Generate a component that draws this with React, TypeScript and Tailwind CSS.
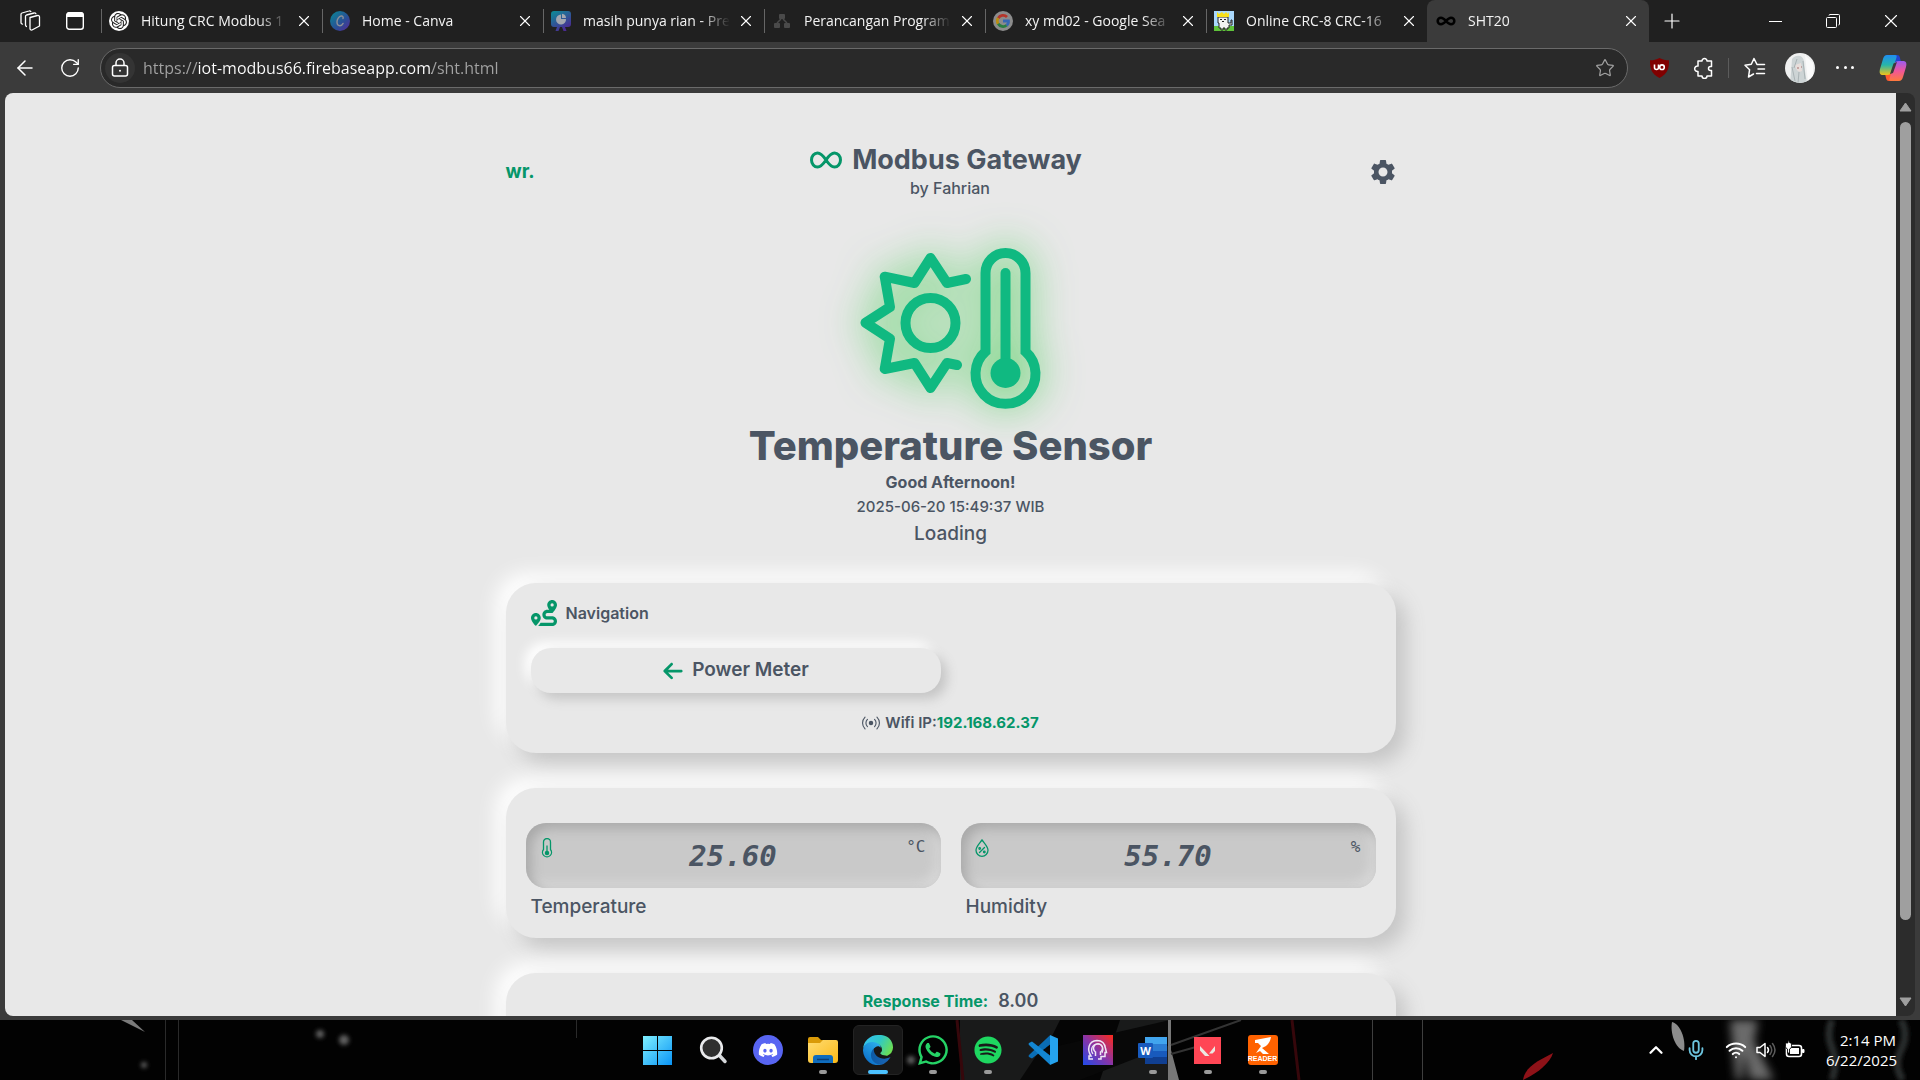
import React from "react";
import { FaRoute, FaDiscord, FaSpotify, FaWhatsapp, FaArrowLeft } from "react-icons/fa6";
import { MdSettings } from "react-icons/md";
import { BsBroadcast } from "react-icons/bs";
import { SiOpenai } from "react-icons/si";
import { ArrowLeft, ChevronUp, Infinity as InfinityIcon, Mic, Plus, RotateCw, Star, Wifi, X } from "lucide-react";

function CanvaIcon() {
  return (
    <svg viewBox="0 0 20 20" className="size-5">
      <defs>
        <linearGradient id="canva" x1="0" y1="0" x2="1" y2="1">
          <stop offset="0" stopColor="#078a94" />
          <stop offset="0.6" stopColor="#2b4d96" />
          <stop offset="1" stopColor="#5b2796" />
        </linearGradient>
      </defs>
      <circle cx="10" cy="10" r="10" fill="url(#canva)" />
      <path d="M13 7.500c.6-1.600-.4-2.700-1.800-2.500-2.300.3-4.200 3.200-4.200 6 0 2.200 1.100 3.700 2.800 3.700 1.500 0 2.600-.9 3.300-2.300" fill="none" stroke="#8d8f98" strokeWidth="1.400" strokeLinecap="round" />
    </svg>
  );
}

function ChartBoardIcon() {
  return (
    <svg viewBox="0 0 20 20" className="size-5">
      <defs>
        <linearGradient id="board" x1="0" y1="0" x2="0.600" y2="1">
          <stop offset="0" stopColor="#0b8f98" />
          <stop offset="1" stopColor="#4b2a93" />
        </linearGradient>
      </defs>
      <path d="M3 0h14a3 3 0 0 1 3 3v10a3 3 0 0 1-3 3h-3l1.500 4h-3L11 16H9l-1.500 4h-3L6 16H3a3 3 0 0 1-3-3V3a3 3 0 0 1 3-3z" fill="url(#board)" />
      <path d="M10 3.500V8h5a5 5 0 1 1-5-4.500z" fill="#a3a7b0" />
      <path d="M11 2.800a4.500 4.500 0 0 1 4 4.200H11z" fill="#a3a7b0" />
    </svg>
  );
}

function NodesIcon() {
  return (
    <svg viewBox="0 0 20 20" className="size-5" fill="#4a4a4a">
      <rect x="7" y="3" width="6" height="5" rx="1" />
      <rect x="2" y="12" width="6" height="5" rx="1" />
      <rect x="12" y="12" width="6" height="5" rx="1" />
      <path d="M9 8 5 12M11 8l4 4" stroke="#4a4a4a" strokeWidth="1.500" />
    </svg>
  );
}

function GoogleIcon() {
  return (
    <span className="flex size-5 items-center justify-center rounded-full bg-[#8c8c8c]">
      <svg viewBox="0 0 20 20" className="size-4" fill="none" strokeWidth="3.500">
        <path d="M15 5a7 7 0 0 0-11 1.500" stroke="#b5352b" />
        <path d="M4 6.300a7 7 0 0 0 0 7.400" stroke="#b98d10" />
        <path d="M4 13.500a7 7 0 0 0 10.500 1.800" stroke="#2a7d41" />
        <path d="M14.500 15.500A6 6 0 0 0 16.800 10H10" stroke="#3767b4" />
      </svg>
    </span>
  );
}

function CrownCatIcon() {
  return (
    <svg viewBox="0 0 20 20" className="size-5">
      <rect width="20" height="15" fill="#a9d8fb" />
      <rect y="15" width="20" height="5" fill="#5fc23a" />
      <path d="M4 6h10v6h3v-3h1v5h-3v3h-2v2h-2v-2H9v2H7v-2H5v-5H4z" fill="#f3f3f3" stroke="#222" />
      <path d="M3 1l2 2 3-2 2 2 2-2 2 2 1-2v5H3z" fill="#f7e018" />
      <path d="M6 8h2v1H6zM10 8h2v1h-2zM8 10h2v1H8z" fill="#222" />
    </svg>
  );
}

type TabInfo = { title: string; icon: React.ReactNode; active?: boolean };

const TABS: TabInfo[] = [
  {
    title: "Hitung CRC Modbus 1",
    icon: (
      <span className="flex size-5 items-center justify-center rounded-full bg-white">
        <SiOpenai className="size-4 text-[#222222]" />
      </span>
    ),
  },
  { title: "Home - Canva", icon: <CanvaIcon /> },
  { title: "masih punya rian - Pre", icon: <ChartBoardIcon /> },
  { title: "Perancangan Program", icon: <NodesIcon /> },
  { title: "xy md02 - Google Sea", icon: <GoogleIcon /> },
  { title: "Online CRC-8 CRC-16", icon: <CrownCatIcon /> },
  { title: "SHT20", icon: <InfinityIcon className="size-5 text-black" strokeWidth={3} />, active: true },
];

function Tab({ title, icon, active }: TabInfo) {
  return (
    <div
      className={
        active
          ? "flex h-[42px] w-[222px] items-center rounded-t-lg bg-[#3b3b3b] pr-[6px] pl-[9px]"
          : "flex h-[42px] w-[221px] items-center pr-[6px]"
      }
    >
      {!active && <span className="mr-[7px] h-6 w-px bg-[#666666]" />}
      <button type="button" role="tab" aria-selected={!!active} className="flex min-w-0 flex-1 items-center gap-3 text-left">
        <span className="shrink-0">{icon}</span>
        <span className="flex-1 mask-r-from-80% pb-px text-sm whitespace-nowrap text-[#f3f3f3]">{title}</span>
      </button>
      <button type="button" aria-label={"Close " + title} className="ml-1 flex size-6 items-center justify-center text-white">
        <X className="size-[18px]" strokeWidth={1.500} />
      </button>
    </div>
  );
}

function TitleBar() {
  return (
    <header className="flex h-[42px] shrink-0 items-center bg-[#202020] text-white">
      <div className="flex w-[101px] items-center gap-6 pl-[19px]">
        <button type="button" aria-label="Workspaces">
          <svg viewBox="0 0 22 22" className="size-[22px]" fill="none" stroke="currentColor" strokeWidth="1.300" strokeLinejoin="round">
            <path d="M11 7.500 18.500 5.500a1.500 1.500 0 0 1 2 1.500v9L13 20a1.500 1.500 0 0 1-2-1.500z" />
            <path d="M8 16.500a1.500 1.500 0 0 1-1.500-1.500V6.500a1.500 1.500 0 0 1 1-1.500L15 3a1.500 1.500 0 0 1 2 1.300" />
            <path d="M4 14a1.500 1.500 0 0 1-2-1.500v-8A1.500 1.500 0 0 1 3 3l7-2a1.500 1.500 0 0 1 2 1" />
          </svg>
        </button>
        <button type="button" aria-label="Tab actions">
          <svg viewBox="0 0 20 20" className="size-5">
            <rect x="1.700" y="1.700" width="16.600" height="16.600" rx="2.500" fill="none" stroke="white" strokeWidth="1.400" />
            <path d="M1.500 6V4a3 3 0 0 1 3-3h11a3 3 0 0 1 3 3v2z" fill="white" />
          </svg>
        </button>
      </div>
      <div role="tablist" className="flex">
        {TABS.map((t) => (
          <Tab key={t.title} {...t} />
        ))}
      </div>
      <button type="button" aria-label="New tab" className="ml-[9px] flex size-7 items-center justify-center">
        <Plus className="size-6" strokeWidth={1.200} />
      </button>
      <div className="ml-auto flex">
        <button type="button" aria-label="Minimize" className="flex w-[58px] items-center justify-center">
          <span className="h-px w-[13px] bg-white" />
        </button>
        <button type="button" aria-label="Restore" className="flex w-[58px] items-center justify-center">
          <svg viewBox="0 0 14 14" className="size-[14px]" fill="none" stroke="currentColor">
            <rect x="0.500" y="3.500" width="10" height="10" rx="1" />
            <path d="M3 1.500Q3 .5 4 .5h8.500q1 0 1 1V10q0 1-1 1" />
          </svg>
        </button>
        <button type="button" aria-label="Close" className="flex w-[58px] items-center justify-center">
          <X className="size-[22px]" strokeWidth={1.200} />
        </button>
      </div>
    </header>
  );
}

function CopilotIcon() {
  return (
    <svg viewBox="0 0 28 28" className="size-7">
      <defs>
        <linearGradient id="cpA" x1="0" y1="0" x2="0" y2="1">
          <stop offset="0" stopColor="#1f8df2" />
          <stop offset="0.500" stopColor="#27b6a9" />
          <stop offset="1" stopColor="#f0c419" />
        </linearGradient>
        <linearGradient id="cpB" x1="0" y1="0" x2="0" y2="1">
          <stop offset="0" stopColor="#9a5cf0" />
          <stop offset="0.500" stopColor="#f0569a" />
          <stop offset="1" stopColor="#ff7a3c" />
        </linearGradient>
      </defs>
      <path d="M15 1h3c2 0 2.500 1 3 3l1 4h-4c-2 0-3 .5-4 2z" fill="#2343cf" />
      <path d="M13 27h-3c-2 0-2.500-1-3-3l-1-4h4c2 0 3-.5 4-2z" fill="#ff5a2e" />
      <path d="M8 1h8c1.500 0 2 .8 1.500 2.500l-4.500 14C12.300 19.800 11 21 8 21H4c-3 0-4-2-3-6L4 5c.8-2.500 2-4 4-4z" fill="url(#cpA)" />
      <path d="M20 27h-8c-1.500 0-2-.8-1.500-2.500l4.500-14C15.700 8.200 17 7 20 7h4c3 0 4 2 3 6l-3 10c-.8 2.500-2 4-4 4z" fill="url(#cpB)" />
      <path d="M14.500 9.500 18 8l-4 11-3 1z" fill="#3b3b3b" />
    </svg>
  );
}

function Toolbar() {
  return (
    <div className="flex h-[51px] shrink-0 items-center bg-[#3b3b3b] text-white">
      <button type="button" aria-label="Back" className="ml-[13px] flex size-6 items-center justify-center">
        <ArrowLeft className="size-6" strokeWidth={1.500} />
      </button>
      <button type="button" aria-label="Refresh" className="ml-[21px] flex size-6 items-center justify-center">
        <RotateCw className="size-[22px]" strokeWidth={1.500} />
      </button>
      <div className="ml-[18px] flex h-10 flex-1 items-center rounded-full border border-[#6a6a6a] bg-[#292929] pr-3 pl-1">
        <button type="button" aria-label="Site information" className="flex size-[30px] items-center justify-center rounded-full bg-[#343434]">
          <svg viewBox="0 0 20 20" className="size-5" fill="none" stroke="currentColor" strokeWidth="1.500">
            <rect x="2.500" y="7.500" width="15" height="10.500" rx="2" />
            <path d="M6 7V5a4 4 0 0 1 8 0v2" />
            <circle cx="10" cy="12.800" r="1" fill="currentColor" stroke="none" />
          </svg>
        </button>
        <input
          type="text"
          aria-label="Address"
          defaultValue="https://iot-modbus66.firebaseapp.com/sht.html"
          className="ml-2 min-w-0 flex-1 bg-[linear-gradient(to_right,#a3a3a3_55px,#ffffff_55px,#ffffff_289px,#a3a3a3_289px)] bg-clip-text text-base text-transparent caret-white outline-none"
        />
        <button type="button" aria-label="Add to favorites" className="text-[#a0a0a0]">
          <Star className="size-5" strokeWidth={1.500} />
        </button>
      </div>
      <button type="button" aria-label="uBlock Origin" className="ml-[22px]">
        <svg viewBox="0 0 19 20" className="h-5 w-[19px]">
          <path d="M9.500 0c3 1.600 6 2.300 9.500 2.300 0 8.500-1 13-9.500 17.700C1 15.300 0 10.800 0 2.300 3.500 2.300 6.500 1.600 9.500 0z" fill="#800000" />
          <path d="M4.500 6.500v3a2 2 0 0 0 4 0v-3" fill="none" stroke="white" strokeWidth="1.600" />
          <circle cx="12" cy="9.200" r="2.300" fill="none" stroke="white" strokeWidth="1.600" />
        </svg>
      </button>
      <button type="button" aria-label="Extensions" className="ml-6">
        <svg viewBox="0 0 22 22" className="size-[22px]" fill="none" stroke="currentColor" strokeWidth="1.500" strokeLinejoin="round">
          <path d="M5 4h4a2.500 2.500 0 1 1 5 0h4.500v5.500h-1a2 2 0 0 0 0 4h1V19H14a2.500 2.500 0 0 1-5 0H5v-4.500a2.800 2.800 0 1 1 0-5.500z" />
        </svg>
      </button>
      <span className="ml-[13px] h-5 w-px bg-[#5c5c5c]" />
      <button type="button" aria-label="Favorites" className="ml-[15px]">
        <svg viewBox="0 0 22 22" className="size-[22px]" fill="none" stroke="currentColor" strokeWidth="1.500" strokeLinejoin="round" strokeLinecap="round">
          <path d="M13 7.500 10 1.500 7.300 7.300 1 8.200l4.600 4.500L4.500 20l5-3M13 7.500h7.500M14 12h6.500M12.500 16.500h8" />
        </svg>
      </button>
      <button type="button" aria-label="Profile" className="ml-[19px]">
        <svg viewBox="0 0 30 30" className="size-[30px]">
          <clipPath id="avatar"><circle cx="15" cy="15" r="15" /></clipPath>
          <g clipPath="url(#avatar)">
            <rect width="30" height="30" fill="#eff0f0" />
            <path d="M7 6c4-5 11-4 12 2l1 10 2 12H5l1-10z" fill="#cdd4d5" />
            <path d="M10 12c1 6 4 8 7 6l-1-8z" fill="#e8dedb" />
            <path d="M7 14l3 14M12 6l-3 9M18 8l2 18M14 19l-1 11" stroke="#a9b2b4" fill="none" />
            <path d="M12 15h2M16 14h1" stroke="#a1716e" />
            <path d="M20 2l8 8v14l-5 4z" fill="#fafafa" />
          </g>
        </svg>
      </button>
      <button type="button" aria-label="Settings and more" className="ml-[21px] flex w-[18px] justify-between">
        <span className="size-[3px] rounded-full bg-white" />
        <span className="size-[3px] rounded-full bg-white" />
        <span className="size-[3px] rounded-full bg-white" />
      </button>
      <button type="button" aria-label="Copilot" className="mr-[13px] ml-[25px]">
        <CopilotIcon />
      </button>
    </div>
  );
}

function HeroIcon() {
  return (
    <svg viewBox="851 238 200 180" className="h-[180px] w-[200px] overflow-visible drop-shadow-[0_0_20px_rgba(60,205,75,0.850)]" fill="none" stroke="#10b981" strokeWidth="10" strokeLinecap="round" strokeLinejoin="round">
      <path d="M966 279 947 283 930.500 258 914.500 283 884.700 276.700 890 307 865.500 322.700 890 338.700 884.700 369 914.500 363 930.500 388 947 363 957 365" />
      <circle cx="930.500" cy="323" r="25" />
      <path d="M985.500 351.500V273a20 20 0 0 1 40 0v78.500a30 30 0 1 1-40 0z" strokeLinejoin="miter" />
      <path d="M1005.500 273v90" />
      <circle cx="1005.500" cy="373" r="15" fill="#10b981" stroke="none" />
    </svg>
  );
}

const CARD = "rounded-[30px] bg-[#e8e8e8] shadow-[10px_10px_20px_#c5c5c5,-10px_-10px_20px_#ffffff]";

type ReadingInfo = { label: string; value: string; unit: string; icon: React.ReactNode };

const READINGS: ReadingInfo[] = [
  {
    label: "Temperature",
    value: "25.60",
    unit: "°C",
    icon: (
      <svg viewBox="0 0 20 20" className="size-5" fill="none" stroke="#059669" strokeWidth="1.300">
        <path d="M6.500 11.500V4a3.500 3.500 0 0 1 7 0v7.500a4.500 4.500 0 1 1-7 0zM10 7.500V14" />
        <circle cx="10" cy="15" r="1.600" fill="#059669" />
      </svg>
    ),
  },
  {
    label: "Humidity",
    value: "55.70",
    unit: "%",
    icon: (
      <svg viewBox="0 0 20 20" className="size-5" fill="none" stroke="#059669" strokeWidth="1.300" strokeLinecap="round">
        <path d="M10 2c2.500 3.500 6 6.500 6 10.300a6 6 0 0 1-12 0C4 8.500 7.500 5.500 10 2zM12.500 9.500l-5 5" />
        <circle cx="7.700" cy="10.500" r="0.800" />
        <circle cx="12.300" cy="14" r="0.800" />
      </svg>
    ),
  },
];

function Reading({ label, value, unit, icon }: ReadingInfo) {
  return (
    <div>
      <div className="grid h-[65px] grid-cols-[1fr_auto_1fr] rounded-[20px] bg-[#c9c9c9] px-[11px] font-['DejaVu_Sans_Mono',monospace] shadow-[inset_5px_5px_12px_#a8a8a8,inset_-5px_-5px_12px_#dadada]">
        <span className="pt-[15px]">{icon}</span>
        <output className="self-center text-[29px] leading-8 font-bold italic">{value}</output>
        <span className="pt-[14px] pr-1 text-right text-base leading-5">{unit}</span>
      </div>
      <p className="mt-2 pl-[5px] text-[19px] leading-[22px] font-medium">{label}</p>
    </div>
  );
}

function SensorPage() {
  return (
    <main className="min-w-0 flex-1 overflow-hidden rounded-l-lg bg-[#e8e8e8] font-[Inter,sans-serif] text-[#4b5563]">
      <div className="mx-auto flex max-w-[890px] flex-col">
        <div className="grid grid-cols-[1fr_auto_1fr] items-center pt-[51px]">
          <a href="#home" className="text-[19px] leading-6 font-bold text-[#059669]">wr.</a>
          <div className="-ml-[9px] text-center">
            <h1 className="flex items-center gap-[10px] text-[27px] leading-8 font-bold">
              <svg viewBox="0 0 32 18" className="h-[18px] w-8" fill="none" stroke="#059669" strokeWidth="3" aria-hidden="true">
                <path d="M16 9c-3-4.500-5-7-8.500-7a6 7 0 0 0 0 14C11 16 13 13.500 16 9s5-7 8.500-7a6 7 0 0 1 0 14C21 16 19 13.500 16 9z" />
              </svg>
              Modbus Gateway
            </h1>
            <p className="ml-2 text-base leading-6 font-medium">by Fahrian</p>
          </div>
          <button type="button" aria-label="Settings" className="-mr-0.5 justify-self-end">
            <MdSettings className="size-[30px]" />
          </button>
        </div>
        <div className="flex flex-col items-center pt-[38px]">
          <HeroIcon />
          <h2 className="mt-1 text-[40px] leading-12 font-extrabold">Temperature Sensor</h2>
          <p className="text-base leading-6 font-bold">Good Afternoon!</p>
          <p className="text-[15px] leading-[26px] font-medium">2025-06-20 15:49:37 WIB</p>
          <p className="text-[19px] leading-7 font-medium">Loading</p>
        </div>
        <section className={CARD + " mt-[35px] h-[170px] px-[25px] pt-4"}>
          <div className="flex items-center gap-[9px] pb-[21px]">
            <FaRoute className="size-[26px] text-[#059669]" />
            <h3 className="text-base leading-7 font-semibold">Navigation</h3>
          </div>
          <div className="grid grid-cols-2 gap-5">
            <button type="button" className="flex h-[45px] items-center justify-center gap-2 rounded-[20px] bg-[#e8e8e8] text-[19px] font-semibold shadow-[6px_6px_12px_#c5c5c5,-6px_-6px_12px_#ffffff]">
              <FaArrowLeft className="size-[22px] text-[#059669]" />
              Power Meter
            </button>
          </div>
          <p className="mt-[18px] flex items-center justify-center text-[15px] leading-6 font-semibold">
            <BsBroadcast className="mr-[5px] size-[18px]" />
            Wifi IP:<span className="font-bold text-[#059669]">192.168.62.37</span>
          </p>
        </section>
        <section className={CARD + " mt-[35px] grid h-[150px] grid-cols-2 gap-5 px-5 pt-[35px]"}>
          {READINGS.map((r) => (
            <Reading key={r.label} {...r} />
          ))}
        </section>
        <section className={CARD + " mt-[35px] flex h-[110px] justify-center gap-[10px] pt-4"}>
          <span className="text-base leading-6 font-bold text-[#059669]">Response Time:</span>
          <span className="text-lg leading-6 font-semibold">8.00</span>
        </section>
      </div>
    </main>
  );
}

function Scrollbar() {
  return (
    <div aria-hidden="true" className="flex w-[19px] flex-col items-center rounded-r-lg bg-[#2c2c2c] py-[9px]">
      <svg viewBox="0 0 13 10" className="h-[10px] w-[13px]"><path d="M6.500 1 12 9H1z" fill="#9f9f9f" stroke="#9f9f9f" strokeLinejoin="round" /></svg>
      <div className="mt-[10px] mb-[77px] w-[11px] flex-1 rounded-full bg-[#9f9f9f]" />
      <svg viewBox="0 0 13 10" className="h-[10px] w-[13px]"><path d="M6.500 9 12 1H1z" fill="#9f9f9f" stroke="#9f9f9f" strokeLinejoin="round" /></svg>
    </div>
  );
}

function WindowsIcon() {
  return (
    <svg viewBox="0 0 29 29" className="size-[29px]">
      <defs>
        <linearGradient id="win" gradientUnits="userSpaceOnUse" x1="0" y1="0" x2="29" y2="29">
          <stop offset="0" stopColor="#7ff0ff" />
          <stop offset="1" stopColor="#0a94f5" />
        </linearGradient>
      </defs>
      <path d="M0 0h14v14H0zM15 0h14v14H15zM0 15h14v14H0zM15 15h14v14H15z" fill="url(#win)" />
    </svg>
  );
}

function SearchIcon() {
  return (
    <svg viewBox="0 0 30 30" className="size-[30px]">
      <path d="M21 20l6 6.500" stroke="#d5d7da" strokeWidth="3.500" strokeLinecap="round" />
      <circle cx="13.500" cy="13" r="10.300" fill="#2f2f2f" stroke="#e9eaec" strokeWidth="2.600" />
    </svg>
  );
}

function FolderIcon() {
  return (
    <svg viewBox="0 0 30 28" className="h-7 w-[30px]">
      <defs>
        <linearGradient id="fold" x1="0" y1="0" x2="1" y2="1">
          <stop offset="0" stopColor="#ffdc72" />
          <stop offset="1" stopColor="#fbb917" />
        </linearGradient>
      </defs>
      <path d="M0 3q0-2 2-2h8l3 3h15v8H0z" fill="#d99a08" />
      <path d="M0 7h12l3-3h13q2 0 2 2v18q0 3-3 3H3q-3 0-3-3z" fill="url(#fold)" />
      <path d="M5 27v-5q0-3 3-3h14q3 0 3 3v5z" fill="#0f6cbd" />
      <path d="M9 23.500h12" stroke="#0a3f78" strokeWidth="1.500" />
    </svg>
  );
}

function EdgeIcon() {
  return (
    <svg viewBox="0 0 256 256" className="size-[30px]">
      <defs>
        <linearGradient id="eA" x1="0" x2="1" y1="0.600" y2="0.600"><stop offset="0" stopColor="#0c59a4" /><stop offset="1" stopColor="#1b66b5" /></linearGradient>
        <linearGradient id="eB" x1="0.800" x2="0.200" y1="0" y2="1"><stop offset="0" stopColor="#2fb4ee" /><stop offset="1" stopColor="#0a6bc7" /></linearGradient>
        <linearGradient id="eC" x1="0" x2="1" y1="0.200" y2="0.600"><stop offset="0" stopColor="#35c1f1" /><stop offset="0.500" stopColor="#2fc8c8" /><stop offset="1" stopColor="#6cdf52" /></linearGradient>
      </defs>
      <path d="M231 190c-3 2-7 4-11 5a105 105 0 0 1-37 7c-49 0-91-34-91-77 0-12 6-23 16-29-44 2-56 48-56 75 0 77 70 84 86 84a130 130 0 0 0 38-8 128 128 0 0 0 57-54c2-3 0-5-2-3z" fill="url(#eA)" />
      <path d="M106 241a79 79 0 0 1-23-21 81 81 0 0 1 29-120c3-2 8-4 15-4 10 0 20 5 26 13-3-30-33-66-89-66C18 53 0 108 0 135a128 128 0 0 0 166 116 79 79 0 0 1-60-10z" fill="url(#eB)" />
      <path d="M152 149c-1 1-4 3-4 7 0 3 2 6 6 9 18 13 53 11 53 11a77 77 0 0 0 49-67C257 79 244 58 240 50 214 0 156 0 128 0A128 128 0 0 0 0 126c1-36 37-66 80-66 4 0 24 0 43 10 17 9 25 19 31 29 7 11 8 26 8 31s-3 14-10 19z" fill="url(#eC)" />
    </svg>
  );
}

function VsCodeIcon() {
  return (
    <svg viewBox="0 0 30 30" className="size-[30px]">
      <path d="M22 .3 24 8 4 23.500 1 22q-1-1 0-2z" fill="#0a6db5" />
      <path d="M22 29.700 24 22 4 6.500 1 8q-1 1 0 2z" fill="#1386d2" />
      <path d="M22 0 30 3.500v23L22 30z" fill="#25a3ee" />
    </svg>
  );
}

function HeadIcon() {
  return (
    <svg viewBox="0 0 30 30" className="size-[30px]">
      <defs>
        <linearGradient id="head" x1="0" y1="1" x2="1" y2="0">
          <stop offset="0" stopColor="#1f4bea" />
          <stop offset="0.500" stopColor="#8a34a6" />
          <stop offset="1" stopColor="#ff2a1a" />
        </linearGradient>
      </defs>
      <rect width="30" height="30" fill="url(#head)" />
      <path d="M10 24h-4v-3h2c-4-6-3-15 6-15.500 6 0 8 4 8.500 8l1 4H22v4h-4v2.500h-3M12.500 21v-4a4.500 4.500 0 1 1 5 0v3" fill="none" stroke="#eee6f5" strokeWidth="1.500" />
      <path d="M10 19c-3-4-1-10 4.500-10s6.500 5 4.500 9" fill="none" stroke="#eee6f5" strokeWidth="1.200" />
    </svg>
  );
}

function WordIcon() {
  return (
    <span className="relative block h-[27px] w-[29px]">
      <svg viewBox="0 0 29 27" className="h-[27px] w-[29px]">
        <path d="M7 0h22v7H7z" fill="#41a5ee" />
        <path d="M7 7h22v7H7z" fill="#2b7cd3" />
        <path d="M7 14h22v6H7z" fill="#185abd" />
        <path d="M7 20h22v7H7z" fill="#103f91" />
        <rect y="6" width="15" height="15" rx="1" fill="#185abd" />
      </svg>
      <span className="absolute top-[6px] left-0 w-[15px] text-center text-[11px] leading-[15px] font-bold text-white">W</span>
    </span>
  );
}

function ValorantIcon() {
  return (
    <svg viewBox="0 0 27 27" className="size-[27px]">
      <rect width="27" height="27" fill="#ff4655" />
      <path d="M6 9l9.500 10h-4.500L6 13.500zM21 9v5l-2.500 2.500H15z" fill="#ece8e1" />
    </svg>
  );
}

function ReaderIcon() {
  return (
    <span className="flex size-[30px] flex-col items-center rounded-[3px] bg-[#ff6200] pt-[2px]">
      <svg viewBox="0 0 18 17" className="h-[17px] w-[18px]" fill="white">
        <path d="M1 3 17 0q-1 6-5 9l-4 2 7 6H9l-3-3-4 2 5-7-3-3H1z" />
      </svg>
      <span className="font-['Liberation_Sans',sans-serif] text-[7px] leading-[9px] font-bold text-white">READER</span>
    </span>
  );
}

type AppInfo = { name: string; icon: React.ReactNode; state?: "running" | "focused" };

const APPS: AppInfo[] = [
  { name: "Start", icon: <WindowsIcon /> },
  { name: "Search", icon: <SearchIcon /> },
  {
    name: "Discord",
    icon: (
      <span className="flex size-[30px] items-center justify-center rounded-full bg-[#5865f2]">
        <FaDiscord className="size-5 text-white" />
      </span>
    ),
  },
  { name: "File Explorer", icon: <FolderIcon />, state: "running" },
  { name: "Microsoft Edge", icon: <EdgeIcon />, state: "focused" },
  { name: "WhatsApp", icon: <FaWhatsapp className="size-[34px] text-[#25d366]" />, state: "running" },
  { name: "Spotify", icon: <FaSpotify className="size-7 text-[#1ed760]" />, state: "running" },
  { name: "Visual Studio Code", icon: <VsCodeIcon /> },
  { name: "Assistant", icon: <HeadIcon /> },
  { name: "Word", icon: <WordIcon />, state: "running" },
  { name: "Valorant", icon: <ValorantIcon />, state: "running" },
  { name: "Foxit Reader", icon: <ReaderIcon />, state: "running" },
];

function Wallpaper() {
  return (
    <svg viewBox="0 0 1920 60" preserveAspectRatio="xMidYMid slice" className="absolute inset-0 h-full w-full" aria-hidden="true">
      <defs>
        <filter id="soft" x="-50%" y="-50%" width="200%" height="200%"><feGaussianBlur stdDeviation="2" /></filter>
        <filter id="softer" x="-50%" y="-50%" width="200%" height="200%"><feGaussianBlur stdDeviation="5" /></filter>
      </defs>
      <rect width="1920" height="60" fill="#020202" />
      <path d="M960 0h210v60H960z" fill="#191a1a" />
      <path d="M1060 0h60l-20 60h-70z" fill="#050505" />
      <path d="M1040 30l130-30v25l-90 35h-60z" fill="#080808" />
      <path d="M957 0l6 60M1292 0l7 60" stroke="#36070b" strokeWidth="3" />
      <path d="M1168 0h3v30l8 30h-11z" fill="#777777" />
      <path d="M1171 25l70-25M1171 34l50-14" stroke="#333333" strokeWidth="2" />
      <path d="M121 0h11l13 12z" fill="#7a7a7a" />
      <path d="M165.500 0v60M178.500 0v60M576.500 0v18" stroke="#2a2a2a" />
      <path d="M1372.500 0v60M1422.500 0v60" stroke="#3e3e3e" />
      <g fill="#606060" filter="url(#soft)">
        <circle cx="320" cy="14" r="4" />
        <circle cx="344" cy="20" r="5" />
        <circle cx="144" cy="45" r="3" />
        <circle cx="911" cy="40" r="4" />
      </g>
      <path d="M1553 33c-3 10-15 20-30 27 2-12 12-18 30-27z" fill="#8e1218" />
      <path d="M1672 2c8 2 14 16 12 29-9-3-14-18-12-29z" fill="#8c8c8c" />
      <path d="M1730 0h28l-4 22 20 38h-24l-6-30-2 30h-6z" fill="#6a6a6a" filter="url(#softer)" />
      <path d="M1832 0q-6 14 0 28t0 32M1901 0q8 14 0 30t2 30" stroke="#2c2f2f" strokeWidth="7" fill="none" filter="url(#soft)" />
    </svg>
  );
}

function Taskbar() {
  return (
    <footer className="relative h-[60px] shrink-0 overflow-hidden bg-black text-white">
      <Wallpaper />
      <div className="relative grid h-full grid-cols-[1fr_auto_1fr] items-center">
        <span />
        <nav aria-label="Taskbar" className="flex gap-[5px]">
          {APPS.map((a) => (
            <button
              key={a.name}
              type="button"
              aria-label={a.name}
              className={
                a.state === "focused"
                  ? "relative flex size-[50px] items-center justify-center rounded-md border border-[#232323] bg-[#171717]"
                  : "relative flex size-[50px] items-center justify-center"
              }
            >
              {a.icon}
              {a.state === "focused" && <span className="absolute inset-x-[14px] bottom-0 h-1 rounded-full bg-[#4cc2ff]" />}
              {a.state === "running" && <span className="absolute inset-x-[21px] bottom-px h-1 rounded-full bg-[#9a9a9a]" />}
            </button>
          ))}
        </nav>
        <div className="flex items-center justify-self-end pr-6">
          <button type="button" aria-label="Show hidden icons">
            <ChevronUp className="size-[22px]" strokeWidth={2.500} />
          </button>
          <button type="button" aria-label="Microphone" className="ml-[18px] text-[#6cc4de]">
            <Mic className="size-[22px]" />
          </button>
          <button type="button" aria-label="Network, volume and battery" className="ml-[18px] flex items-center gap-[9px]">
            <Wifi className="size-[22px]" strokeWidth={2.200} />
            <svg viewBox="0 0 20 20" className="size-5" fill="none" stroke="currentColor" strokeWidth="1.500" strokeLinejoin="round" strokeLinecap="round">
              <path d="M1 7.500h3L9 3.500v13l-5-4H1zM11.500 7.500q2 2.500 0 5" />
              <path d="M14 5.500q3.500 4.500 0 9M16.500 3.500q5 6.500 0 13" stroke="#5c5c5c" />
            </svg>
            <svg viewBox="0 0 20 20" className="size-5">
              <rect x="1.500" y="5.500" width="15" height="11" rx="2.500" fill="none" stroke="white" strokeWidth="1.600" />
              <rect x="5" y="8" width="9" height="6" fill="white" />
              <path d="M17.500 9.500h1.500v3h-1.500z" fill="white" stroke="white" />
              <path d="M3 0v3H.5v3.500q0 2 2 2.500V13h2V9q2-.5 2-2.500V3H5z" fill="white" stroke="#050505" strokeWidth="0.800" />
            </svg>
          </button>
          <div className="ml-[21px] w-[70px] text-right text-[15px] leading-5">
            <p>2:14 PM</p>
            <p>6/22/2025</p>
          </div>
        </div>
      </div>
    </footer>
  );
}

export default function App() {
  return (
    <div className="flex h-screen flex-col bg-[#3b3b3b] font-['Open_Sans','Noto_Sans',sans-serif]">
      <TitleBar />
      <Toolbar />
      <div className="flex min-h-0 flex-1 px-[5px] pb-1">
        <SensorPage />
        <Scrollbar />
      </div>
      <Taskbar />
    </div>
  );
}
